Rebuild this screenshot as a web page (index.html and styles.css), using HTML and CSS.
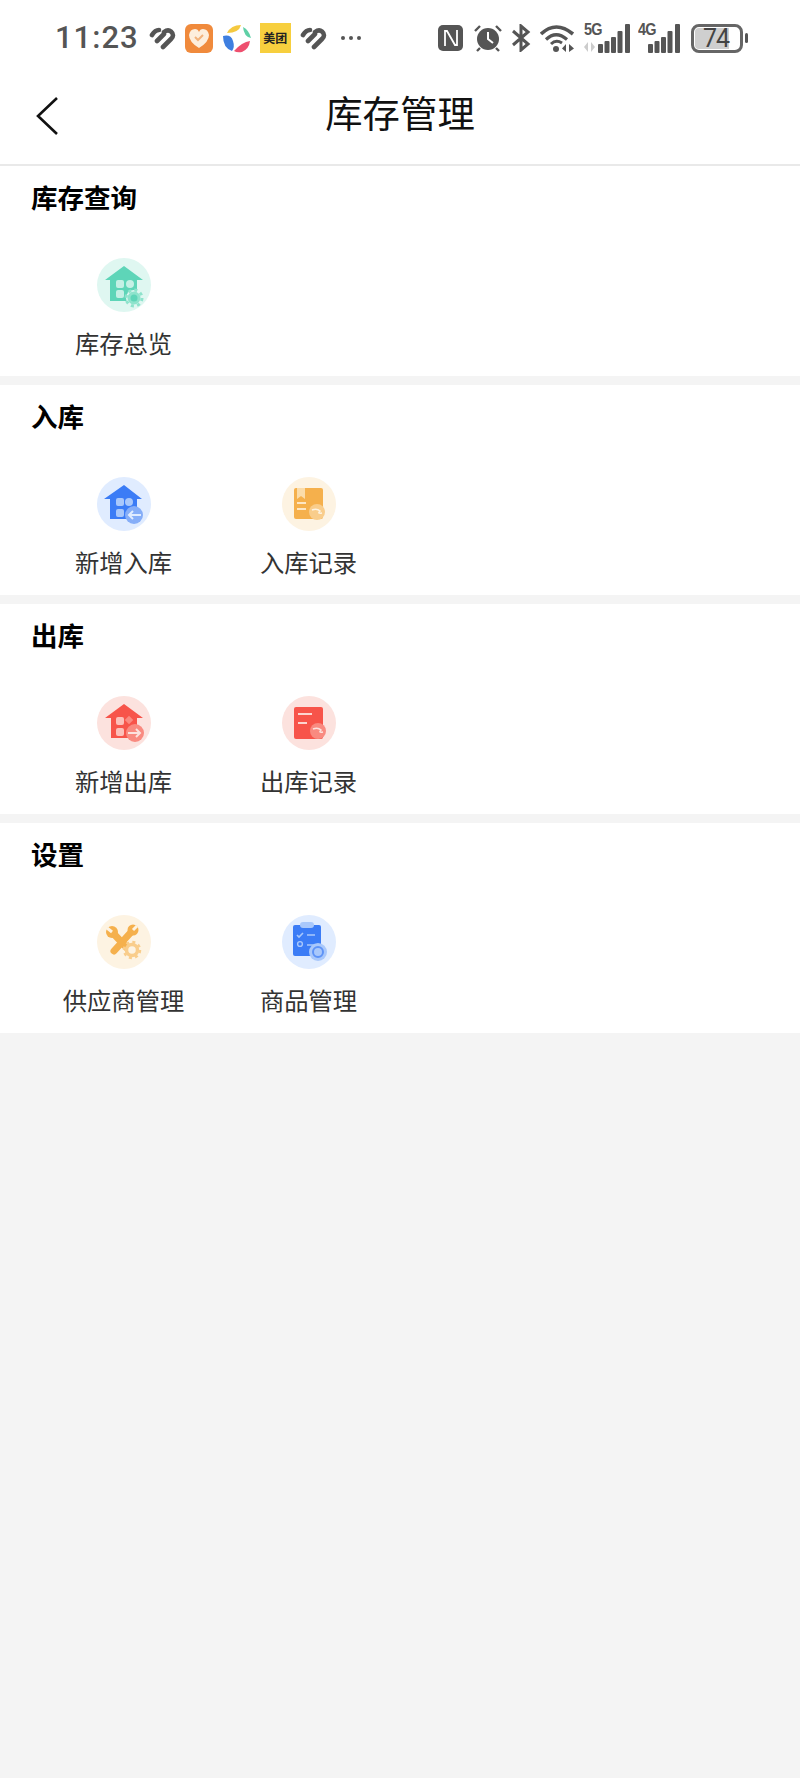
FILE: index.html
```html
<!DOCTYPE html>
<html lang="zh">
<head>
<meta charset="utf-8">
<title>库存管理</title>
<link rel="stylesheet" href="styles.css">
</head>
<body>
<div class="top">
  <div class="status">
    <div class="status-left">
      <span class="time">11:23</span>
      <svg class="heart" width="27" height="23" viewBox="0 0 27 23"><path d="M3 8 Q6 3 10 3 M8 14 L15 7 M14 20 L22 12 Q26 8 22 4.500 Q19 2 15 5" fill="none" stroke="#555" stroke-width="4.600" stroke-linecap="round"/></svg>
      <svg width="28" height="29" viewBox="0 0 28 29"><rect width="28" height="29" rx="6" fill="#f08a3c"/><path d="M14 24 Q4 18 4 11 Q5 5 10 5 Q13 5 14 8 Q15 5 18 5 Q23 5 24 11 Q24 18 14 24 Z" fill="#fdeedd"/><path d="M10 13 L13 16 L18 11" fill="none" stroke="#f2b27c" stroke-width="2"/></svg>
      <svg width="29" height="29" viewBox="0 0 29 29"><path d="M5 9 Q9 1 19 1 Q17 9 5 9 Z" fill="#f5c93f"/><path d="M21 3 Q27 6 29 14 Q22 13 21 3 Z" fill="#5fd0a6"/><path d="M1 12 Q9 10 11 17 Q13 23 10 27 Q1 24 1 12 Z" fill="#3f7fe0"/><path d="M12 27 Q20 18 28 17 Q27 25 20 28 Q15 29 12 27 Z" fill="#ee4f6e"/></svg>
      <span class="mt">美团</span>
      <svg class="heart" width="27" height="23" viewBox="0 0 27 23"><path d="M3 8 Q6 3 10 3 M8 14 L15 7 M14 20 L22 12 Q26 8 22 4.500 Q19 2 15 5" fill="none" stroke="#555" stroke-width="4.600" stroke-linecap="round"/></svg>
      <svg class="dots" width="22" height="6" viewBox="0 0 22 6"><circle cx="3" cy="3" r="2" fill="#555"/><circle cx="11" cy="3" r="2" fill="#555"/><circle cx="19" cy="3" r="2" fill="#555"/></svg>
    </div>
    <div class="status-right">
      <svg width="25" height="26" viewBox="0 0 25 26"><rect width="25" height="26" rx="5" fill="#555"/><path d="M7 21 V6 H9 L17 20 H19 V5" fill="none" stroke="#fff" stroke-width="1.800"/></svg>
      <svg class="alarm" width="28" height="28" viewBox="0 0 28 28"><circle cx="14" cy="15" r="11" fill="#555"/><path d="M14 8 V15 L19 19" fill="none" stroke="#fff" stroke-width="2"/><path d="M1 7 L6 2 M27 7 L22 2 M6 24 L3 27 M22 24 L25 27" stroke="#555" stroke-width="2.400"/></svg>
      <svg width="22" height="28" viewBox="0 0 22 28"><path d="M3 7 L18 20 L11 26 V2 L18 8 L3 21" fill="none" stroke="#555" stroke-width="3"/></svg>
      <svg width="36" height="28" viewBox="0 0 36 28"><path d="M1 10 Q16 -4 33 10" fill="none" stroke="#555" stroke-width="3.600"/><path d="M6 15.500 Q16 6 27 15.500" fill="none" stroke="#555" stroke-width="3.200"/><path d="M11 20 Q16 15 22 19" fill="none" stroke="#555" stroke-width="3"/><circle cx="16" cy="25" r="3" fill="#555"/><path d="M26 20 L22 24.500 L26 28 Z M29 20 L34 24.500 L29 28 Z" fill="#555"/></svg>
      <div class="signal">
        <span class="net">5G</span>
        <svg width="46" height="29" viewBox="0 0 46 29"><path d="M4 18 L0 23 L4 28 Z M7 18 L11 23 L7 28 Z" fill="#ccc"/><rect x="14" y="20" width="5" height="9" rx="1" fill="#555"/><rect x="20.500" y="17" width="5" height="12" rx="1" fill="#555"/><rect x="27" y="13" width="5" height="16" rx="1" fill="#555"/><rect x="33.500" y="7" width="5" height="22" rx="1" fill="#555"/><rect x="41" y="0" width="5" height="29" rx="1" fill="#555"/></svg>
      </div>
      <div class="signal">
        <span class="net">4G</span>
        <svg width="44" height="29" viewBox="0 0 44 29"><rect x="10" y="20" width="5" height="9" rx="1" fill="#555"/><rect x="16.500" y="17" width="5" height="12" rx="1" fill="#555"/><rect x="23" y="13" width="5" height="16" rx="1" fill="#555"/><rect x="29.500" y="7" width="5" height="22" rx="1" fill="#555"/><rect x="37" y="0" width="5" height="29" rx="1" fill="#555"/></svg>
      </div>
      <div class="battery">
        <div class="battery-body"><span class="battery-level">74</span></div>
        <span class="battery-tip"></span>
      </div>
    </div>
  </div>
  <div class="nav">
    <svg class="back" width="24" height="40" viewBox="0 0 24 40"><path d="M22 2 L3 20 L22 38" fill="none" stroke="#111" stroke-width="2.600"/></svg>
    <span class="title">库存管理</span>
  </div>
</div>

<div class="section">
  <h3>库存查询</h3>
  <div class="items">
    <div class="item">
      <svg width="54" height="54" viewBox="0 0 54 54">
        <circle cx="27" cy="27" r="27" fill="#dff7f1"/>
        <path d="M27 8 L46 22 H40 V43 H13 V22 H8 Z" fill="#5ed5b8"/>
        <rect x="19" y="22" width="8" height="8" rx="2" fill="#c5f0e5"/><circle cx="33" cy="26" r="4" fill="#c5f0e5"/><rect x="19" y="32" width="8" height="8" rx="2" fill="#c5f0e5"/>
        <circle cx="37" cy="40" r="8" fill="#dff7f1"/>
        <circle cx="37" cy="40" r="5" fill="#5ed5b8" stroke="#8ee3cc" stroke-width="3"/><circle cx="37" cy="40" r="8" fill="none" stroke="#8ee3cc" stroke-width="3" stroke-dasharray="3 3.300"/>
      </svg>
      <span class="label">库存总览</span>
    </div>
  </div>
</div>

<div class="section">
  <h3>入库</h3>
  <div class="items">
    <div class="item">
      <svg width="54" height="54" viewBox="0 0 54 54">
        <circle cx="27" cy="27" r="27" fill="#e0ecff"/>
        <path d="M27 8 L45 22 H40 V42 H13 V22 H7 Z" fill="#3b7cf6"/>
        <rect x="19" y="21" width="8" height="8" rx="2" fill="#a9c8fb"/><circle cx="32" cy="25" r="4" fill="#a9c8fb"/><rect x="19" y="32" width="8" height="8" rx="2" fill="#a9c8fb"/>
        <circle cx="37" cy="38" r="9" fill="#86aef8"/><path d="M44 38 H32 M36 34 L32 38 L36 42" fill="none" stroke="#e0ecff" stroke-width="2"/>
      </svg>
      <span class="label">新增入库</span>
    </div>
    <div class="item">
      <svg width="54" height="54" viewBox="0 0 54 54">
        <circle cx="27" cy="27" r="27" fill="#fdf3e2"/>
        <rect x="12" y="11" width="29" height="31" rx="2" fill="#f5b04c"/>
        <path d="M15 11 H23 V22 L19 19 L15 22 Z" fill="#fbdca9"/><path d="M15 26 H24 M15 32 H24" stroke="#fde6c4" stroke-width="1.800"/>
        <circle cx="35" cy="35" r="8" fill="#f9cd8b"/><path d="M30 33 Q35 31 38 34 Q35 37 40 36" fill="none" stroke="#fdf3e2" stroke-width="1.600"/>
      </svg>
      <span class="label">入库记录</span>
    </div>
  </div>
</div>

<div class="section">
  <h3>出库</h3>
  <div class="items">
    <div class="item">
      <svg width="54" height="54" viewBox="0 0 54 54">
        <circle cx="27" cy="27" r="27" fill="#fce2de"/>
        <path d="M27 8 L46 22 H40 V42 H14 V22 H8 Z" fill="#f7544a"/>
        <rect x="19" y="21" width="8" height="8" rx="2" fill="#fcc0ba"/><rect x="29" y="21" width="6" height="6" transform="rotate(45 32 24)" fill="#fa8a80"/><rect x="19" y="32" width="8" height="8" rx="2" fill="#fcc0ba"/>
        <circle cx="38" cy="37" r="9" fill="#f98a80"/><path d="M31 37 H43 M39 33 L43 37 L39 41" fill="none" stroke="#fce2de" stroke-width="2"/>
      </svg>
      <span class="label">新增出库</span>
    </div>
    <div class="item">
      <svg width="54" height="54" viewBox="0 0 54 54">
        <circle cx="27" cy="27" r="27" fill="#fce2de"/>
        <rect x="12" y="11" width="29" height="32" rx="2" fill="#f7544a"/>
        <path d="M16 18 H30 M16 27 H25" stroke="#fcd5d0" stroke-width="2"/>
        <circle cx="36" cy="35" r="8" fill="#f98a80"/><path d="M31 33 Q36 31 39 34 Q36 37 41 36" fill="none" stroke="#fce2de" stroke-width="1.600"/>
      </svg>
      <span class="label">出库记录</span>
    </div>
  </div>
</div>

<div class="section">
  <h3>设置</h3>
  <div class="items">
    <div class="item">
      <svg width="54" height="54" viewBox="0 0 54 54">
        <circle cx="27" cy="27" r="27" fill="#fdf3e2"/>
        <path d="M15 17 L32 35" stroke="#f5b04c" stroke-width="7"/><path d="M36 15 L17 36" stroke="#f5b04c" stroke-width="7" stroke-linecap="round"/>
        <circle cx="15" cy="17" r="6" fill="#f5b04c"/><circle cx="36" cy="15" r="5.500" fill="#f5b04c"/>
        <path d="M10 13 L15 17" stroke="#fdf3e2" stroke-width="3"/><path d="M40 11 L36 15" stroke="#fdf3e2" stroke-width="3"/>
        <circle cx="35" cy="35" r="5.500" fill="#fdf3e2" stroke="#f9cd8b" stroke-width="3.500"/><circle cx="35" cy="35" r="8" fill="none" stroke="#f9cd8b" stroke-width="2.500" stroke-dasharray="3 3.300"/>
      </svg>
      <span class="label">供应商管理</span>
    </div>
    <div class="item">
      <svg width="54" height="54" viewBox="0 0 54 54">
        <circle cx="27" cy="27" r="27" fill="#e0ecff"/>
        <rect x="11" y="10" width="28" height="31" rx="2" fill="#3b7cf6"/>
        <rect x="18" y="7" width="14" height="6" rx="3" fill="#a9c8fb"/>
        <path d="M15 20 L17 22 L21 18 M25 20 H33 M25 30 H33" fill="none" stroke="#a9c8fb" stroke-width="1.600"/><circle cx="18" cy="29" r="2.400" fill="none" stroke="#a9c8fb" stroke-width="1.400"/>
        <circle cx="36" cy="37" r="9" fill="#a9c8fb"/><circle cx="36" cy="37" r="5" fill="none" stroke="#5e93f7" stroke-width="2"/>
      </svg>
      <span class="label">商品管理</span>
    </div>
  </div>
</div>
</body>
</html>
```

FILE: styles.css
```css
html, body { margin: 0; padding: 0; }
body {
  background: #f4f4f4;
  min-height: 1778px;
  color: #333;
  font-family: "Noto Sans CJK SC", "Noto Sans", sans-serif;
}
svg { display: block; }

.top { background: #fff; border-bottom: 2px solid #e9e9e9; }

.status {
  height: 76px;
  display: flex;
  justify-content: space-between;
  align-items: center;
  padding: 0 52px 0 55px;
}
.status-left, .status-right { display: flex; align-items: center; }
.status-left { gap: 9px; }
.status-right { gap: 8px; }
.time {
  font-family: "Roboto", sans-serif;
  font-size: 31px;
  font-weight: 500;
  letter-spacing: 1px;
  color: #555;
  line-height: 32px;
  margin-right: 1px;
}
.mt {
  width: 31px;
  height: 30px;
  background: #f7cf3e;
  color: #222;
  font-size: 12px;
  font-weight: 700;
  line-height: 30px;
  text-align: center;
  white-space: nowrap;
}
.dots { margin-left: 4px; }
.alarm { margin-left: 3px; }
.signal { position: relative; }
.net {
  position: absolute;
  left: 0;
  top: -3px;
  font-family: "Liberation Sans", sans-serif;
  font-size: 17px;
  font-weight: 700;
  letter-spacing: -1px;
  color: #555;
  line-height: 18px;
  transform: scaleX(.85);
  transform-origin: left;
}
.battery { display: flex; align-items: center; gap: 2px; margin-left: 1px; }
.battery-body {
  width: 52px;
  height: 29px;
  box-sizing: border-box;
  border: 3px solid #666;
  border-radius: 8px;
  padding: 1px;
  overflow: hidden;
}
.battery-level {
  display: block;
  width: 34px;
  height: 21px;
  background: #cfcfcf;
  border-radius: 4px 0 0 4px;
  font-family: "Roboto", sans-serif;
  font-size: 25px;
  letter-spacing: -1px;
  line-height: 21px;
  color: #444;
  text-align: right;
}
.battery-tip { width: 3px; height: 10px; background: #555; border-radius: 2px; }

.nav {
  height: 72px;
  padding-bottom: 16px;
  display: flex;
  align-items: center;
  justify-content: center;
  position: relative;
}
.back { position: absolute; left: 35px; top: 20px; }
.title { font-size: 37.400px; line-height: 48px; color: #111; }

.section {
  background: #fff;
  margin-bottom: 9px;
  padding: 15px 31px 17.500px;
}
.section h3 {
  margin: 0;
  font-size: 26.500px;
  line-height: 32px;
  font-weight: 700;
  color: #000;
}
.items { display: flex; margin-top: 45px; }
.item {
  width: 185px;
  display: flex;
  flex-direction: column;
  align-items: center;
  gap: 14.500px;
}
.label { font-size: 24.300px; line-height: 32px; color: #333; white-space: nowrap; }
```
